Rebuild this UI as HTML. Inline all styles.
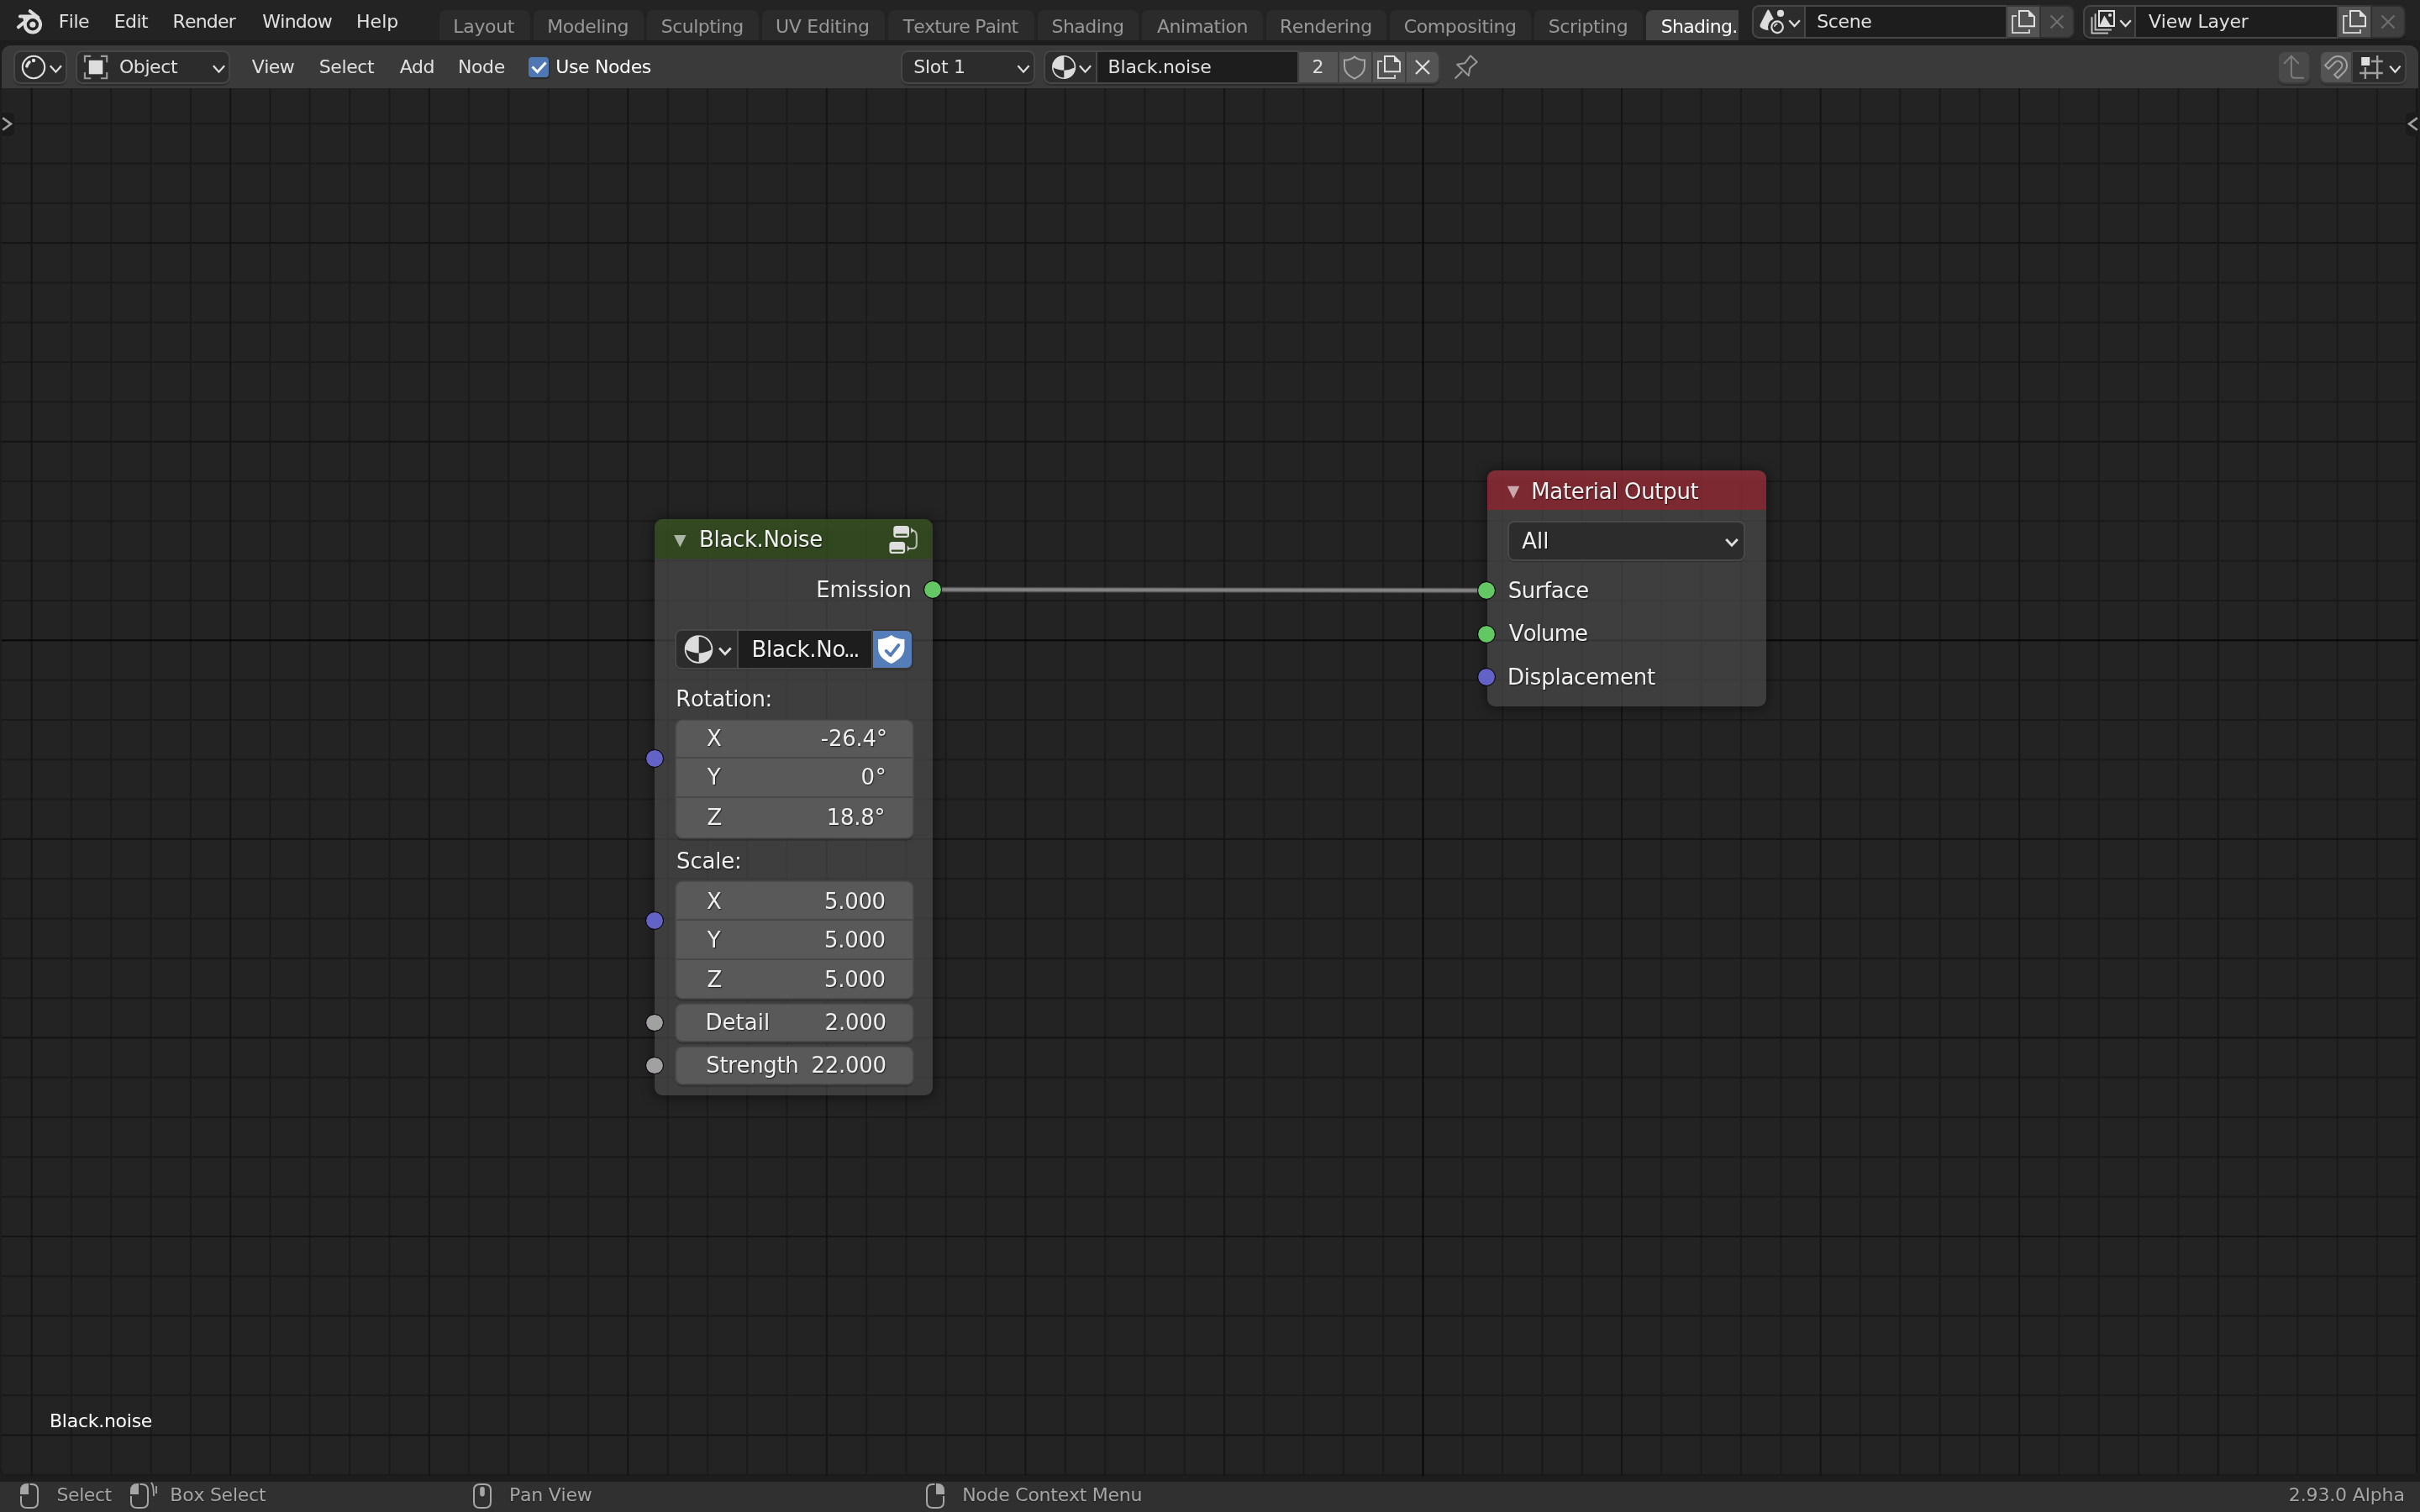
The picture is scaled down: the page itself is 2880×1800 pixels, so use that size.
<!DOCTYPE html>
<html><head><meta charset="utf-8"><title>Blender</title>
<style>
html,body{margin:0;padding:0;}
body{width:2880px;height:1800px;overflow:hidden;-webkit-font-smoothing:antialiased;background:#1d1d1d;font-family:"DejaVu Sans","Liberation Sans",sans-serif;position:relative;}
span,div{font-kerning:none;letter-spacing:-0.43px;}
.n{letter-spacing:-0.5px;}
.st{text-shadow:0 1px 1.5px rgba(0,0,0,0.45);}
.sh{text-shadow:0.8px 1.4px 1.2px rgba(0,0,0,0.7);}
svg{position:absolute;overflow:visible;}
</style></head><body><div id="app" style="position:absolute;left:0;top:0;width:2880px;height:1800px;will-change:transform">
<div style="position:absolute;left:0px;top:0px;width:2880px;height:48px;background:#232323;"></div>
<svg style="left:0;top:0" width="1" height="1"><g fill="none" stroke="#dcdcdc" stroke-linecap="round" stroke-width="4"><path d="M35.700 13.200 L45.300 20.800"/><path d="M23.900 19.600 H39.500"/><path d="M21.900 32.300 L31.500 24.300"/></g><path d="M27 21 L37 20.500 L31 27.500 L28.500 26 Z" fill="#dcdcdc"/><circle cx="38.900" cy="29.250" r="9.150" fill="none" stroke="#dcdcdc" stroke-width="4"/><circle cx="38.900" cy="29.250" r="3.600" fill="#dcdcdc"/></svg>
<span style="position:absolute;left:69.64px;top:13px;font-size:22px;line-height:25px;color:#e0e0e0;white-space:nowrap;letter-spacing:-0.461px;">File</span>
<span style="position:absolute;left:135.74px;top:13px;font-size:22px;line-height:25px;color:#e0e0e0;white-space:nowrap;letter-spacing:-0.539px;">Edit</span>
<span style="position:absolute;left:205.54px;top:13px;font-size:22px;line-height:25px;color:#e0e0e0;white-space:nowrap;letter-spacing:-0.830px;">Render</span>
<span style="position:absolute;left:312.37px;top:13px;font-size:22px;line-height:25px;color:#e0e0e0;white-space:nowrap;letter-spacing:-0.774px;">Window</span>
<span style="position:absolute;left:424.04px;top:13px;font-size:22px;line-height:25px;color:#e0e0e0;white-space:nowrap;letter-spacing:0.036px;">Help</span>
<div style="position:absolute;left:523px;top:12px;width:108px;height:36px;background:#2b2b2b;border-radius:8px 8px 0 0"></div>
<span style="position:absolute;left:539.34px;top:19px;font-size:22px;line-height:25px;color:#989898;white-space:nowrap;letter-spacing:-0.340px;">Layout</span>
<div style="position:absolute;left:635px;top:12px;width:131px;height:36px;background:#2b2b2b;border-radius:8px 8px 0 0"></div>
<span style="position:absolute;left:651.14px;top:19px;font-size:22px;line-height:25px;color:#989898;white-space:nowrap;letter-spacing:-0.388px;">Modeling</span>
<div style="position:absolute;left:770px;top:12px;width:133px;height:36px;background:#2b2b2b;border-radius:8px 8px 0 0"></div>
<span style="position:absolute;left:786.75px;top:19px;font-size:22px;line-height:25px;color:#989898;white-space:nowrap;letter-spacing:-0.522px;">Sculpting</span>
<div style="position:absolute;left:907px;top:12px;width:146px;height:36px;background:#2b2b2b;border-radius:8px 8px 0 0"></div>
<span style="position:absolute;left:923.09px;top:19px;font-size:22px;line-height:25px;color:#989898;white-space:nowrap;letter-spacing:-0.307px;">UV Editing</span>
<div style="position:absolute;left:1057px;top:12px;width:174px;height:36px;background:#2b2b2b;border-radius:8px 8px 0 0"></div>
<span style="position:absolute;left:1074.76px;top:19px;font-size:22px;line-height:25px;color:#989898;white-space:nowrap;letter-spacing:-0.842px;">Texture Paint</span>
<div style="position:absolute;left:1235px;top:12px;width:120px;height:36px;background:#2b2b2b;border-radius:8px 8px 0 0"></div>
<span style="position:absolute;left:1251.45px;top:19px;font-size:22px;line-height:25px;color:#989898;white-space:nowrap;letter-spacing:-0.488px;">Shading</span>
<div style="position:absolute;left:1359px;top:12px;width:144px;height:36px;background:#2b2b2b;border-radius:8px 8px 0 0"></div>
<span style="position:absolute;left:1376.93px;top:19px;font-size:22px;line-height:25px;color:#989898;white-space:nowrap;letter-spacing:-0.465px;">Animation</span>
<div style="position:absolute;left:1507px;top:12px;width:143px;height:36px;background:#2b2b2b;border-radius:8px 8px 0 0"></div>
<span style="position:absolute;left:1522.94px;top:19px;font-size:22px;line-height:25px;color:#989898;white-space:nowrap;letter-spacing:-0.397px;">Rendering</span>
<div style="position:absolute;left:1654px;top:12px;width:168px;height:36px;background:#2b2b2b;border-radius:8px 8px 0 0"></div>
<span style="position:absolute;left:1670.66px;top:19px;font-size:22px;line-height:25px;color:#989898;white-space:nowrap;letter-spacing:-0.356px;">Compositing</span>
<div style="position:absolute;left:1826px;top:12px;width:129px;height:36px;background:#2b2b2b;border-radius:8px 8px 0 0"></div>
<span style="position:absolute;left:1842.65px;top:19px;font-size:22px;line-height:25px;color:#989898;white-space:nowrap;letter-spacing:-0.360px;">Scripting</span>
<div style="position:absolute;left:1959px;top:12px;width:110px;height:36px;background:#424242;border-radius:8px 0 0 0;overflow:hidden"></div>
<div style="position:absolute;left:1959px;top:0;width:110px;height:48px;overflow:hidden">
<span style="position:absolute;left:17.65px;top:19px;font-size:22px;line-height:25px;color:#ffffff;white-space:nowrap;letter-spacing:-0.692px;">Shading.</span>
</div>
<div style="position:absolute;left:2085px;top:8px;width:384px;height:38px;border-radius:8.5px;box-shadow:0 2px 0.5px rgba(0,0,0,0.22)"></div>
<div style="position:absolute;left:2085px;top:6px;width:63px;height:40px;background:#464646;border-radius:8.5px 0px 0px 8.5px"></div>
<div style="position:absolute;left:2148px;top:6px;width:240px;height:40px;background:#464646;border-radius:0px 0px 0px 0px"></div>
<div style="position:absolute;left:2388px;top:6px;width:40px;height:40px;background:#3a3a3a;border-radius:0px 0px 0px 0px"></div>
<div style="position:absolute;left:2428px;top:6px;width:41px;height:40px;background:#2e2e2e;border-radius:0px 8.5px 8.5px 0px"></div>
<div style="position:absolute;left:2087px;top:8px;width:60px;height:36px;background:#2c2c2c;border-radius:6.5px 0 0 6.5px"></div>
<div style="position:absolute;left:2149px;top:8px;width:238px;height:36px;background:#1d1d1d;border-radius:0 0 0 0"></div>
<div style="position:absolute;left:2389px;top:8px;width:38px;height:36px;background:#545454;border-radius:0 0 0 0"></div>
<div style="position:absolute;left:2429px;top:8px;width:38px;height:36px;background:#3f3f3f;border-radius:0 6.5px 6.5px 0"></div>
<svg style="left:2090px;top:8px" width="36" height="36" viewBox="0 0 36 36"><path d="M13 4.8 Q14.3 2.4 15.6 4.8 L20.8 14.4 A10.8 10.8 0 0 0 14.6 28 Q9 27.800 5.4 24.8 Q3.8 23.400 4.8 21 Z" fill="#dcdcdc"/><circle cx="29" cy="7.900" r="4.100" fill="#dcdcdc"/><circle cx="25.100" cy="24.250" r="6.800" fill="none" stroke="#dcdcdc" stroke-width="2.200"/><path d="M21.900 23 A3.600 3.600 0 0 1 24.600 20.600" fill="none" stroke="#dcdcdc" stroke-width="1.800" stroke-linecap="round"/></svg>
<svg style="left:0;top:0" width="1" height="1"><path d="M2129.2999999999997 24.150000000000002 L2135.6 31.05 L2141.9 24.150000000000002" fill="none" stroke="#e0e0e0" stroke-width="2.2" stroke-linecap="butt" stroke-linejoin="miter"/></svg>
<span style="position:absolute;left:2162.25px;top:13px;font-size:22px;line-height:25px;color:#e0e0e0;white-space:nowrap;letter-spacing:-0.363px;">Scene</span>
<svg style="left:2394px;top:12px" width="28.0" height="28.0" viewBox="0 0 28 28"><g fill="none" stroke-width="2"><path d="M9 1 H20 L27 8 V19.2 H9 Z" stroke="#e0e0e0"/><path d="M6 7 H1 V27 H21 V23" stroke="#e0e0e0" opacity="0.85"/></g><path d="M20 1 L27 8 H20 Z" fill="#e0e0e0"/></svg>
<svg style="left:0;top:0" width="1" height="1"><path d="M2440.5 18.5 L2455.5 33.5 M2455.5 18.5 L2440.5 33.5" stroke="#6e6e6e" stroke-width="2.2" fill="none"/></svg>
<div style="position:absolute;left:2479px;top:8px;width:384px;height:38px;border-radius:8.5px;box-shadow:0 2px 0.5px rgba(0,0,0,0.22)"></div>
<div style="position:absolute;left:2479px;top:6px;width:62px;height:40px;background:#464646;border-radius:8.5px 0px 0px 8.5px"></div>
<div style="position:absolute;left:2541px;top:6px;width:241px;height:40px;background:#464646;border-radius:0px 0px 0px 0px"></div>
<div style="position:absolute;left:2782px;top:6px;width:40px;height:40px;background:#3a3a3a;border-radius:0px 0px 0px 0px"></div>
<div style="position:absolute;left:2822px;top:6px;width:41px;height:40px;background:#2e2e2e;border-radius:0px 8.5px 8.5px 0px"></div>
<div style="position:absolute;left:2481px;top:8px;width:59px;height:36px;background:#2c2c2c;border-radius:6.5px 0 0 6.5px"></div>
<div style="position:absolute;left:2542px;top:8px;width:239px;height:36px;background:#1d1d1d;border-radius:0 0 0 0"></div>
<div style="position:absolute;left:2783px;top:8px;width:38px;height:36px;background:#545454;border-radius:0 0 0 0"></div>
<div style="position:absolute;left:2823px;top:8px;width:38px;height:36px;background:#3f3f3f;border-radius:0 6.5px 6.5px 0"></div>
<svg style="left:0;top:0" width="1" height="1"><rect x="2498" y="13" width="18" height="18" fill="none" stroke="#e4e4e4" stroke-width="2"/><path d="M2499 30 L2504.300 18.500 L2511.500 30Z" fill="#dcdcdc"/><circle cx="2511" cy="18" r="2.100" fill="#dcdcdc"/><path d="M2493.600 16.200 V35.500 H2513 M2489.500 20.200 V39.500 H2509" fill="none" stroke="#bebebe" stroke-width="2"/></svg>
<svg style="left:0;top:0" width="1" height="1"><path d="M2523.2999999999997 24.150000000000002 L2529.6 31.05 L2535.9 24.150000000000002" fill="none" stroke="#e0e0e0" stroke-width="2.2" stroke-linecap="butt" stroke-linejoin="miter"/></svg>
<span style="position:absolute;left:2556.93px;top:13px;font-size:22px;line-height:25px;color:#e0e0e0;white-space:nowrap;letter-spacing:-0.228px;">View Layer</span>
<svg style="left:2788px;top:12px" width="28.0" height="28.0" viewBox="0 0 28 28"><g fill="none" stroke-width="2"><path d="M9 1 H20 L27 8 V19.2 H9 Z" stroke="#e0e0e0"/><path d="M6 7 H1 V27 H21 V23" stroke="#e0e0e0" opacity="0.85"/></g><path d="M20 1 L27 8 H20 Z" fill="#e0e0e0"/></svg>
<svg style="left:0;top:0" width="1" height="1"><path d="M2834.5 18.5 L2849.5 33.5 M2849.5 18.5 L2834.5 33.5" stroke="#6e6e6e" stroke-width="2.2" fill="none"/></svg>
<div style="position:absolute;left:2px;top:54.4px;width:2876px;height:50.6px;background:#3a3a3a;border-radius:11px 11px 0 0"></div>
<div style="position:absolute;left:16px;top:62px;width:64px;height:38px;border-radius:8.5px;box-shadow:0 2px 0.5px rgba(0,0,0,0.22)"></div>
<div style="position:absolute;left:16px;top:60px;width:64px;height:40px;background:#464646;border-radius:8.5px 8.5px 8.5px 8.5px"></div>
<div style="position:absolute;left:18px;top:62px;width:60px;height:36px;background:#2c2c2c;border-radius:6.5px 6.5px 6.5px 6.5px"></div>
<svg style="left:25px;top:65px" width="30" height="30" viewBox="0 0 30 30"><circle cx="15" cy="15" r="13.200" fill="none" stroke="#e2e2e2" stroke-width="2.100"/><path d="M6.900 13.900 Q7.900 10.800 10 8.900" fill="none" stroke="#e2e2e2" stroke-width="3.500" stroke-linecap="round"/><circle cx="15" cy="7" r="2.200" fill="#e2e2e2"/></svg>
<svg style="left:0;top:0" width="1" height="1"><path d="M59.800000000000004 78.3 L66.4 85.7 L73.0 78.3" fill="none" stroke="#e0e0e0" stroke-width="2.2" stroke-linecap="butt" stroke-linejoin="miter"/></svg>
<div style="position:absolute;left:90px;top:62px;width:184px;height:38px;border-radius:8.5px;box-shadow:0 2px 0.5px rgba(0,0,0,0.22)"></div>
<div style="position:absolute;left:90px;top:60px;width:184px;height:40px;background:#464646;border-radius:8.5px 8.5px 8.5px 8.5px"></div>
<div style="position:absolute;left:92px;top:62px;width:180px;height:36px;background:#2c2c2c;border-radius:6.5px 6.5px 6.5px 6.5px"></div>
<svg style="left:99px;top:65px" width="30" height="30" viewBox="0 0 30 30"><rect x="6.800" y="6.800" width="16.500" height="16.500" fill="#dedede"/><g fill="none" stroke="#9c9c9c" stroke-width="2.100"><path d="M1.900 9.200 V1.900 H9.200"/><path d="M20.900 1.900 H28.200 V9.200"/><path d="M1.900 20.900 V28.200 H9.200"/><path d="M20.900 28.200 H28.200 V20.900"/></g></svg>
<span style="position:absolute;left:141.96px;top:67px;font-size:22px;line-height:25px;color:#e0e0e0;white-space:nowrap;letter-spacing:-0.418px;">Object</span>
<svg style="left:0;top:0" width="1" height="1"><path d="M253.9 78.3 L260.5 85.7 L267.1 78.3" fill="none" stroke="#e0e0e0" stroke-width="2.2" stroke-linecap="butt" stroke-linejoin="miter"/></svg>
<span style="position:absolute;left:299.83px;top:67px;font-size:22px;line-height:25px;color:#e0e0e0;white-space:nowrap;letter-spacing:-0.598px;">View</span>
<span style="position:absolute;left:379.75px;top:67px;font-size:22px;line-height:25px;color:#e0e0e0;white-space:nowrap;letter-spacing:-0.399px;">Select</span>
<span style="position:absolute;left:475.63px;top:67px;font-size:22px;line-height:25px;color:#e0e0e0;white-space:nowrap;letter-spacing:-0.605px;">Add</span>
<span style="position:absolute;left:545.04px;top:67px;font-size:22px;line-height:25px;color:#e0e0e0;white-space:nowrap;letter-spacing:-0.429px;">Node</span>
<div style="position:absolute;left:629px;top:68px;width:24px;height:24px;background:#4f77b4;border-radius:4px;box-shadow:1px 1.5px 1px rgba(0,0,0,0.25)"></div>
<svg style="left:629px;top:68px" width="24" height="24" viewBox="0 0 24 24"><path d="M4.5 11.5 L10.5 17.5 L20.5 6.5" fill="none" stroke="#ffffff" stroke-width="3"/></svg>
<span style="position:absolute;left:661.29px;top:67px;font-size:22px;line-height:25px;color:#ffffff;white-space:nowrap;letter-spacing:-0.373px;">Use Nodes</span>
<div style="position:absolute;left:1072px;top:62px;width:160px;height:38px;border-radius:8.5px;box-shadow:0 2px 0.5px rgba(0,0,0,0.22)"></div>
<div style="position:absolute;left:1072px;top:60px;width:160px;height:40px;background:#464646;border-radius:8.5px 8.5px 8.5px 8.5px"></div>
<div style="position:absolute;left:1074px;top:62px;width:156px;height:36px;background:#2c2c2c;border-radius:6.5px 6.5px 6.5px 6.5px"></div>
<span style="position:absolute;left:1087.35px;top:67px;font-size:22px;line-height:25px;color:#e0e0e0;white-space:nowrap;letter-spacing:-0.295px;">Slot 1</span>
<svg style="left:0;top:0" width="1" height="1"><path d="M1211.4 78.3 L1218 85.7 L1224.6 78.3" fill="none" stroke="#e0e0e0" stroke-width="2.2" stroke-linecap="butt" stroke-linejoin="miter"/></svg>
<div style="position:absolute;left:1242px;top:62px;width:472px;height:38px;border-radius:8.5px;box-shadow:0 2px 0.5px rgba(0,0,0,0.22)"></div>
<div style="position:absolute;left:1242px;top:60px;width:63px;height:40px;background:#464646;border-radius:8.5px 0px 0px 8.5px"></div>
<div style="position:absolute;left:1305px;top:60px;width:240px;height:40px;background:#464646;border-radius:0px 0px 0px 0px"></div>
<div style="position:absolute;left:1545px;top:60px;width:48px;height:40px;background:#3e3e3e;border-radius:0px 0px 0px 0px"></div>
<div style="position:absolute;left:1593px;top:60px;width:40px;height:40px;background:#3e3e3e;border-radius:0px 0px 0px 0px"></div>
<div style="position:absolute;left:1633px;top:60px;width:40px;height:40px;background:#3e3e3e;border-radius:0px 0px 0px 0px"></div>
<div style="position:absolute;left:1673px;top:60px;width:41px;height:40px;background:#3e3e3e;border-radius:0px 8.5px 8.5px 0px"></div>
<div style="position:absolute;left:1244px;top:62px;width:60px;height:36px;background:#2c2c2c;border-radius:6.5px 0 0 6.5px"></div>
<div style="position:absolute;left:1306px;top:62px;width:238px;height:36px;background:#1d1d1d;border-radius:0 0 0 0"></div>
<div style="position:absolute;left:1546px;top:62px;width:46px;height:36px;background:#545454;border-radius:0 0 0 0"></div>
<div style="position:absolute;left:1594px;top:62px;width:38px;height:36px;background:#545454;border-radius:0 0 0 0"></div>
<div style="position:absolute;left:1634px;top:62px;width:38px;height:36px;background:#545454;border-radius:0 0 0 0"></div>
<div style="position:absolute;left:1674px;top:62px;width:38px;height:36px;background:#545454;border-radius:0 6.5px 6.5px 0"></div>
<svg style="left:0;top:0" width="1" height="1"><defs><clipPath id="mc1"><circle cx="1266.1" cy="80" r="13.3"/></clipPath></defs><g clip-path="url(#mc1)" fill="#dcdcdc"><path d="M1251.8 65.7 H1266.3 V83.724 Q1259.4499999999998 83.724 1252.8 80 L1251.8 80 Z"/><path d="M1266.3 83.724 Q1272.75 83.724 1279.3999999999999 80 L1280.3999999999999 80 V94.3 H1266.3 Z"/></g><circle cx="1266.1" cy="80" r="13.3" fill="none" stroke="#dcdcdc" stroke-width="1.6"/></svg>
<svg style="left:0;top:0" width="1" height="1"><path d="M1284.9 78.3 L1291.5 85.7 L1298.1 78.3" fill="none" stroke="#e0e0e0" stroke-width="2.2" stroke-linecap="butt" stroke-linejoin="miter"/></svg>
<span style="position:absolute;left:1318.54px;top:67px;font-size:22px;line-height:25px;color:#e0e0e0;white-space:nowrap;letter-spacing:-0.170px;">Black.noise</span>
<span style="position:absolute;left:1561.39px;top:67px;font-size:22px;line-height:25px;color:#e0e0e0;white-space:nowrap;letter-spacing:-0.430px;">2</span>
<svg style="left:1597px;top:65px" width="30" height="30" viewBox="0 0 30 30"><path d="M15 2.400 C11.500 5.600 7 6.600 3 6.600 V14 C3 21 8 25.500 15 28.600 C22 25.500 27 21 27 14 V6.600 C23 6.600 18.500 5.600 15 2.400Z" fill="none" stroke="#a6a6a6" stroke-width="2"/></svg>
<svg style="left:1639px;top:66px" width="28.0" height="28.0" viewBox="0 0 28 28"><g fill="none" stroke-width="2"><path d="M9 1 H20 L27 8 V19.2 H9 Z" stroke="#e0e0e0"/><path d="M6 7 H1 V27 H21 V23" stroke="#e0e0e0" opacity="0.85"/></g><path d="M20 1 L27 8 H20 Z" fill="#e0e0e0"/></svg>
<svg style="left:0;top:0" width="1" height="1"><path d="M1685 72 L1701 88 M1701 72 L1685 88" stroke="#e0e0e0" stroke-width="2.2" fill="none"/></svg>
<svg style="left:1728px;top:64px" width="32" height="32" viewBox="0 0 32 32"><g fill="none" stroke="#999999" stroke-width="2" stroke-linejoin="round"><path d="M12.100 21 L3.600 29.500"/><path d="M6.100 12.700 L15.200 11.300 L21 3.600 L22.200 2.400 L29.700 9.800 L28.400 11.100 L21.400 16.900 L19.800 26 Z"/></g></svg>
<div style="position:absolute;left:2710px;top:62px;width:40px;height:38px;border-radius:8.5px;box-shadow:0 2px 0.5px rgba(0,0,0,0.22)"></div>
<div style="position:absolute;left:2710px;top:60px;width:40px;height:40px;background:#3b3b3b;border-radius:8.5px 8.5px 8.5px 8.5px"></div>
<div style="position:absolute;left:2712px;top:62px;width:36px;height:36px;background:#494949;border-radius:6.5px 6.5px 6.5px 6.5px"></div>
<svg style="left:0;top:0" width="1" height="1"><path d="M2718.200 75.900 L2726.900 66.600 L2735.700 75.900 M2726.900 67 V88.800 Q2726.900 92.800 2730.900 92.800 H2742" fill="none" stroke="#7d7d7d" stroke-width="2"/></svg>
<div style="position:absolute;left:2760px;top:62px;width:104px;height:38px;border-radius:8.5px;box-shadow:0 2px 0.5px rgba(0,0,0,0.22)"></div>
<div style="position:absolute;left:2760px;top:60px;width:39px;height:40px;background:#3b3b3b;border-radius:8.5px 0px 0px 8.5px"></div>
<div style="position:absolute;left:2799px;top:60px;width:65px;height:40px;background:#464646;border-radius:0px 8.5px 8.5px 0px"></div>
<div style="position:absolute;left:2762px;top:62px;width:36px;height:36px;background:#545454;border-radius:6.5px 0 0 6.5px"></div>
<div style="position:absolute;left:2800px;top:62px;width:62px;height:36px;background:#2c2c2c;border-radius:0 6.5px 6.5px 0"></div>
<svg style="left:0;top:0" width="1" height="1"><g transform="translate(2782.300,77.800) rotate(45)"><path d="M-10.800 0 A10.800 10.800 0 0 1 10.800 0 V10.800 H5 V0 A5 5 0 0 0 -5 0 V10.800 H-10.800 Z" fill="none" stroke="#a2a2a2" stroke-width="2" stroke-linejoin="miter"/></g></svg>
<svg style="left:0;top:0" width="1" height="1"><rect x="2810.200" y="68" width="10" height="10" fill="#dedede"/><path d="M2829.200 66 V94 M2814.900 80 V94 M2808.100 87 H2835.800 M2822.100 73 H2835.800" stroke="#a0a0a0" stroke-width="2.400" fill="none"/></svg>
<svg style="left:0;top:0" width="1" height="1"><path d="M2844.2000000000003 78.60000000000001 L2850.4 85.8 L2856.6 78.60000000000001" fill="none" stroke="#e0e0e0" stroke-width="2.2" stroke-linecap="butt" stroke-linejoin="miter"/></svg>
<div style="position:absolute;left:2px;top:105px;width:2876px;height:1652px;background:#232323;border-radius:0 0 9px 9px;overflow:hidden"><svg style="left:0;top:0" width="2876" height="1652"><rect x="81.96" y="0" width="2" height="1652" fill="#1a1a1a"/><rect x="129.27" y="0" width="2" height="1652" fill="#1a1a1a"/><rect x="176.58" y="0" width="2" height="1652" fill="#1a1a1a"/><rect x="223.89" y="0" width="2" height="1652" fill="#1a1a1a"/><rect x="318.51" y="0" width="2" height="1652" fill="#1a1a1a"/><rect x="365.82" y="0" width="2" height="1652" fill="#1a1a1a"/><rect x="413.13" y="0" width="2" height="1652" fill="#1a1a1a"/><rect x="460.44" y="0" width="2" height="1652" fill="#1a1a1a"/><rect x="555.06" y="0" width="2" height="1652" fill="#1a1a1a"/><rect x="602.37" y="0" width="2" height="1652" fill="#1a1a1a"/><rect x="649.68" y="0" width="2" height="1652" fill="#1a1a1a"/><rect x="696.99" y="0" width="2" height="1652" fill="#1a1a1a"/><rect x="791.61" y="0" width="2" height="1652" fill="#1a1a1a"/><rect x="838.92" y="0" width="2" height="1652" fill="#1a1a1a"/><rect x="886.23" y="0" width="2" height="1652" fill="#1a1a1a"/><rect x="933.54" y="0" width="2" height="1652" fill="#1a1a1a"/><rect x="1028.16" y="0" width="2" height="1652" fill="#1a1a1a"/><rect x="1075.47" y="0" width="2" height="1652" fill="#1a1a1a"/><rect x="1122.78" y="0" width="2" height="1652" fill="#1a1a1a"/><rect x="1170.09" y="0" width="2" height="1652" fill="#1a1a1a"/><rect x="1264.71" y="0" width="2" height="1652" fill="#1a1a1a"/><rect x="1312.02" y="0" width="2" height="1652" fill="#1a1a1a"/><rect x="1359.33" y="0" width="2" height="1652" fill="#1a1a1a"/><rect x="1406.64" y="0" width="2" height="1652" fill="#1a1a1a"/><rect x="1501.26" y="0" width="2" height="1652" fill="#1a1a1a"/><rect x="1548.57" y="0" width="2" height="1652" fill="#1a1a1a"/><rect x="1595.88" y="0" width="2" height="1652" fill="#1a1a1a"/><rect x="1643.19" y="0" width="2" height="1652" fill="#1a1a1a"/><rect x="1737.81" y="0" width="2" height="1652" fill="#1a1a1a"/><rect x="1785.12" y="0" width="2" height="1652" fill="#1a1a1a"/><rect x="1832.43" y="0" width="2" height="1652" fill="#1a1a1a"/><rect x="1879.74" y="0" width="2" height="1652" fill="#1a1a1a"/><rect x="1974.36" y="0" width="2" height="1652" fill="#1a1a1a"/><rect x="2021.67" y="0" width="2" height="1652" fill="#1a1a1a"/><rect x="2068.98" y="0" width="2" height="1652" fill="#1a1a1a"/><rect x="2116.29" y="0" width="2" height="1652" fill="#1a1a1a"/><rect x="2210.91" y="0" width="2" height="1652" fill="#1a1a1a"/><rect x="2258.22" y="0" width="2" height="1652" fill="#1a1a1a"/><rect x="2305.53" y="0" width="2" height="1652" fill="#1a1a1a"/><rect x="2352.84" y="0" width="2" height="1652" fill="#1a1a1a"/><rect x="2447.46" y="0" width="2" height="1652" fill="#1a1a1a"/><rect x="2494.77" y="0" width="2" height="1652" fill="#1a1a1a"/><rect x="2542.08" y="0" width="2" height="1652" fill="#1a1a1a"/><rect x="2589.39" y="0" width="2" height="1652" fill="#1a1a1a"/><rect x="2684.01" y="0" width="2" height="1652" fill="#1a1a1a"/><rect x="2731.32" y="0" width="2" height="1652" fill="#1a1a1a"/><rect x="2778.63" y="0" width="2" height="1652" fill="#1a1a1a"/><rect x="2825.94" y="0" width="2" height="1652" fill="#1a1a1a"/><rect x="0" y="41.27" width="2876" height="2" fill="#1a1a1a"/><rect x="0" y="88.58" width="2876" height="2" fill="#1a1a1a"/><rect x="0" y="135.89" width="2876" height="2" fill="#1a1a1a"/><rect x="0" y="230.51" width="2876" height="2" fill="#1a1a1a"/><rect x="0" y="277.82" width="2876" height="2" fill="#1a1a1a"/><rect x="0" y="325.13" width="2876" height="2" fill="#1a1a1a"/><rect x="0" y="372.44" width="2876" height="2" fill="#1a1a1a"/><rect x="0" y="467.06" width="2876" height="2" fill="#1a1a1a"/><rect x="0" y="514.37" width="2876" height="2" fill="#1a1a1a"/><rect x="0" y="561.68" width="2876" height="2" fill="#1a1a1a"/><rect x="0" y="608.99" width="2876" height="2" fill="#1a1a1a"/><rect x="0" y="703.61" width="2876" height="2" fill="#1a1a1a"/><rect x="0" y="750.92" width="2876" height="2" fill="#1a1a1a"/><rect x="0" y="798.23" width="2876" height="2" fill="#1a1a1a"/><rect x="0" y="845.54" width="2876" height="2" fill="#1a1a1a"/><rect x="0" y="940.16" width="2876" height="2" fill="#1a1a1a"/><rect x="0" y="987.47" width="2876" height="2" fill="#1a1a1a"/><rect x="0" y="1034.78" width="2876" height="2" fill="#1a1a1a"/><rect x="0" y="1082.09" width="2876" height="2" fill="#1a1a1a"/><rect x="0" y="1176.71" width="2876" height="2" fill="#1a1a1a"/><rect x="0" y="1224.02" width="2876" height="2" fill="#1a1a1a"/><rect x="0" y="1271.33" width="2876" height="2" fill="#1a1a1a"/><rect x="0" y="1318.64" width="2876" height="2" fill="#1a1a1a"/><rect x="0" y="1413.26" width="2876" height="2" fill="#1a1a1a"/><rect x="0" y="1460.57" width="2876" height="2" fill="#1a1a1a"/><rect x="0" y="1507.88" width="2876" height="2" fill="#1a1a1a"/><rect x="0" y="1555.19" width="2876" height="2" fill="#1a1a1a"/><rect x="0" y="1649.81" width="2876" height="2" fill="#1a1a1a"/><rect x="34.65" y="0" width="2" height="1652" fill="#141414"/><rect x="271.20" y="0" width="2" height="1652" fill="#141414"/><rect x="507.75" y="0" width="2" height="1652" fill="#141414"/><rect x="744.30" y="0" width="2" height="1652" fill="#141414"/><rect x="980.85" y="0" width="2" height="1652" fill="#141414"/><rect x="1217.40" y="0" width="2" height="1652" fill="#141414"/><rect x="1453.95" y="0" width="2" height="1652" fill="#141414"/><rect x="1927.05" y="0" width="2" height="1652" fill="#141414"/><rect x="2163.60" y="0" width="2" height="1652" fill="#141414"/><rect x="2400.15" y="0" width="2" height="1652" fill="#141414"/><rect x="2636.70" y="0" width="2" height="1652" fill="#141414"/><rect x="2873.25" y="0" width="2" height="1652" fill="#141414"/><rect x="0" y="183.20" width="2876" height="2" fill="#141414"/><rect x="0" y="419.75" width="2876" height="2" fill="#141414"/><rect x="0" y="892.85" width="2876" height="2" fill="#141414"/><rect x="0" y="1129.40" width="2876" height="2" fill="#141414"/><rect x="0" y="1365.95" width="2876" height="2" fill="#141414"/><rect x="0" y="1602.50" width="2876" height="2" fill="#141414"/><rect x="1690.50" y="0" width="2" height="1652" fill="#080808"/><rect x="0" y="656.30" width="2876" height="2" fill="#080808"/></svg></div>
<div style="position:absolute;left:2px;top:134px;width:15px;height:28px;background:#1b1b1b;border-radius:0 6px 6px 0"></div>
<svg style="left:0;top:0" width="1" height="1"><path d="M3.2 140.4 L13 147.6 L3.2 154.7" fill="none" stroke="#a0a0a0" stroke-width="2.6"/></svg>
<div style="position:absolute;left:2863px;top:134px;width:15px;height:28px;background:#1b1b1b;border-radius:6px 0 0 6px"></div>
<svg style="left:0;top:0" width="1" height="1"><path d="M2876.8 140.4 L2867 147.6 L2876.8 154.7" fill="none" stroke="#a0a0a0" stroke-width="2.6"/></svg>
<span style="position:absolute;left:59.04px;top:1679px;font-size:22px;line-height:25px;color:#ffffff;white-space:nowrap;letter-spacing:-0.270px;">Black.noise</span>
<div style="position:absolute;left:1110px;top:697.8px;width:659px;height:7.8px;transform-origin:0 50%;transform:rotate(0.09deg);background:linear-gradient(rgba(131,131,131,0) 0,rgba(131,131,131,0.28) 1px,rgba(131,131,131,1) 2.6px,rgba(131,131,131,1) 5.2px,rgba(131,131,131,0.28) 6.8px,rgba(131,131,131,0) 7.8px)"></div>
<div style="position:absolute;left:778.8px;top:617.8px;width:331.29999999999995px;height:686.0px;border-radius:9.5px;box-shadow:0 1px 14px 2px rgba(0,0,0,0.42);overflow:hidden"><div style="height:47.5px;background:linear-gradient(rgba(57,84,35,0.8),rgba(53,80,30,0.8) 30%)"></div><div style="height:638.5px;background:rgba(76,76,76,0.66)"></div></div>
<svg style="left:0;top:0" width="1" height="1"><path d="M802 637 H816.6 L809.3 651.4 Z" fill="rgba(255,255,255,0.6)"/></svg>
<span class="sh" style="position:absolute;left:832.05px;top:627px;font-size:26px;line-height:30px;color:#f0f0f0;white-space:nowrap;letter-spacing:-0.360px;">Black.Noise</span>
<svg style="left:1056px;top:624px" width="38" height="38" viewBox="0 0 38 38"><g><rect x="7.300" y="1.900" width="18.700" height="14.200" rx="3.600" fill="#dedede"/><rect x="9.800" y="11.400" width="14" height="2.300" rx="0.800" fill="#2f4a1c"/><rect x="2.400" y="21" width="18.700" height="14" rx="3.600" fill="#dedede"/><rect x="4.700" y="30.400" width="14.200" height="2.300" rx="0.800" fill="#2f4a1c"/><path d="M30.500 7.600 Q34.800 8.600 34.800 14 V24 Q34.800 29 29.500 29 H26" fill="none" stroke="#b4bdb0" stroke-width="2.100"/><path d="M28.200 4.100 L31.400 7.550 L28.200 11Z" fill="#dedede"/><path d="M23.800 25.200 L26.600 29 L23.800 32.800Z" fill="#dedede"/></g></svg>
<span class="sh" style="position:absolute;left:971.25px;top:687px;font-size:26px;line-height:30px;color:#f0f0f0;white-space:nowrap;letter-spacing:-0.288px;">Emission</span>
<div style="position:absolute;left:1099.00px;top:691.00px;width:22px;height:22px;box-sizing:border-box;border-radius:50%;background:#63c763;border:1.2px solid #08030a;background-clip:padding-box"></div>
<div style="position:absolute;left:803.3px;top:749px;width:283.5px;height:48.2px;background:#484848;border-radius:8px;box-shadow:0 1px 1px rgba(0,0,0,0.2)"></div>
<div style="position:absolute;left:1037.6px;top:749px;width:49.4px;height:48.2px;background:#393634;border-radius:0 8px 8px 0"></div>
<div style="position:absolute;left:805.1px;top:751.1px;width:72px;height:43.9px;background:#2c2c2c;border-radius:6px 0 0 6px"></div>
<div style="position:absolute;left:879.2px;top:751.1px;width:157.8px;height:43.9px;background:#1d1d1d"></div>
<div style="position:absolute;left:1038.9px;top:751.1px;width:46.1px;height:43.9px;background:#557dba;border-radius:0 6px 6px 0"></div>
<svg style="left:0;top:0" width="1" height="1"><defs><clipPath id="mc2"><circle cx="831.5" cy="773" r="15.9"/></clipPath></defs><g clip-path="url(#mc2)" fill="#dcdcdc"><path d="M814.6 756.1 H831.7 V777.452 Q823.55 777.452 815.6 773 L814.6 773 Z"/><path d="M831.7 777.452 Q839.45 777.452 847.4 773 L848.4 773 V789.9 H831.7 Z"/></g><circle cx="831.5" cy="773" r="15.9" fill="none" stroke="#dcdcdc" stroke-width="1.8"/></svg>
<svg style="left:0;top:0" width="1" height="1"><path d="M856.1 771.5 L862.9 778.7 L869.6999999999999 771.5" fill="none" stroke="#e0e0e0" stroke-width="2.8" stroke-linecap="butt" stroke-linejoin="miter"/></svg>
<span class="sh" style="position:absolute;left:894.55px;top:758px;font-size:26px;line-height:30px;color:#f0f0f0;white-space:nowrap;letter-spacing:-0.313px;">Black.No</span>
<span class="sh" style="position:absolute;left:1003.72px;top:758px;font-size:26px;line-height:30px;color:#f0f0f0;white-space:nowrap;letter-spacing:-2.460px;">...</span>
<svg style="left:1043px;top:754px" width="36" height="38" viewBox="0 0 36 38"><path d="M17.700 2 C13.500 5.600 8 7 2 7 V17 C2 26 8.500 32 17.700 36 C26.900 32 33.400 26 33.400 17 V7 C27.400 7 21.900 5.600 17.700 2Z" fill="#ffffff"/><path d="M11.600 20.900 L16.800 26.100 L26.400 14" fill="none" stroke="#557dba" stroke-width="3.800" stroke-linecap="round" stroke-linejoin="round"/></svg>
<span class="sh" style="position:absolute;left:804.35px;top:817px;font-size:26px;line-height:30px;color:#f0f0f0;white-space:nowrap;letter-spacing:-0.460px;">Rotation:</span>
<span class="sh" style="position:absolute;left:805.09px;top:1010px;font-size:26px;line-height:30px;color:#f0f0f0;white-space:nowrap;letter-spacing:-0.193px;">Scale:</span>
<div style="position:absolute;left:805px;top:857.8px;width:280.5px;height:138.9px;background:#484848;border-radius:7px;box-shadow:0 0 0 1.6px #4b4b4b,0 3.8px 0.8px -0.2px rgba(0,0,0,0.17);"></div>
<div style="position:absolute;left:805px;top:857.8px;width:280.5px;height:43.2px;background:#595959;border-radius:7px 7px 0 0;"></div>
<span class="sh" style="position:absolute;left:841.03px;top:864px;font-size:26px;line-height:30px;color:#f0f0f0;white-space:nowrap;letter-spacing:0.000px;">X</span>
<span class="sh" style="position:absolute;left:976.83px;top:864px;font-size:26px;line-height:30px;color:#f0f0f0;white-space:nowrap;letter-spacing:-0.245px;">-26.4°</span>
<div style="position:absolute;left:805px;top:903.2px;width:280.5px;height:44.8px;background:#595959;border-radius:0;"></div>
<span class="sh" style="position:absolute;left:841.85px;top:910px;font-size:26px;line-height:30px;color:#f0f0f0;white-space:nowrap;letter-spacing:0.000px;">Y</span>
<span class="sh" style="position:absolute;left:1024.49px;top:910px;font-size:26px;line-height:30px;color:#f0f0f0;white-space:nowrap;letter-spacing:0.847px;">0°</span>
<div style="position:absolute;left:805px;top:950px;width:280.5px;height:46.7px;background:#595959;border-radius:0 0 7px 7px;"></div>
<span class="sh" style="position:absolute;left:841.43px;top:958px;font-size:26px;line-height:30px;color:#f0f0f0;white-space:nowrap;letter-spacing:0.000px;">Z</span>
<span class="sh" style="position:absolute;left:983.74px;top:958px;font-size:26px;line-height:30px;color:#f0f0f0;white-space:nowrap;letter-spacing:-0.265px;">18.8°</span>
<div style="position:absolute;left:805px;top:1050.3px;width:280.5px;height:137.7px;background:#484848;border-radius:7px;box-shadow:0 0 0 1.6px #4b4b4b,0 3.8px 0.8px -0.2px rgba(0,0,0,0.17);"></div>
<div style="position:absolute;left:805px;top:1050.3px;width:280.5px;height:43.7px;background:#595959;border-radius:7px 7px 0 0;"></div>
<span class="sh" style="position:absolute;left:841.03px;top:1058px;font-size:26px;line-height:30px;color:#f0f0f0;white-space:nowrap;letter-spacing:0.000px;">X</span>
<span class="sh" style="position:absolute;left:981.09px;top:1058px;font-size:26px;line-height:30px;color:#f0f0f0;white-space:nowrap;letter-spacing:-0.350px;">5.000</span>
<div style="position:absolute;left:805px;top:1096px;width:280.5px;height:45.0px;background:#595959;border-radius:0;"></div>
<span class="sh" style="position:absolute;left:841.85px;top:1104px;font-size:26px;line-height:30px;color:#f0f0f0;white-space:nowrap;letter-spacing:0.000px;">Y</span>
<span class="sh" style="position:absolute;left:981.09px;top:1104px;font-size:26px;line-height:30px;color:#f0f0f0;white-space:nowrap;letter-spacing:-0.350px;">5.000</span>
<div style="position:absolute;left:805px;top:1143px;width:280.5px;height:45.0px;background:#595959;border-radius:0 0 7px 7px;"></div>
<span class="sh" style="position:absolute;left:841.43px;top:1151px;font-size:26px;line-height:30px;color:#f0f0f0;white-space:nowrap;letter-spacing:0.000px;">Z</span>
<span class="sh" style="position:absolute;left:981.09px;top:1151px;font-size:26px;line-height:30px;color:#f0f0f0;white-space:nowrap;letter-spacing:-0.350px;">5.000</span>
<div style="position:absolute;left:805px;top:1196.1px;width:280.5px;height:43.1px;background:#595959;border-radius:7px;box-shadow:0 0 0 1.6px #4b4b4b,0 3.8px 0.8px -0.2px rgba(0,0,0,0.17);"></div>
<span class="sh" style="position:absolute;left:839.45px;top:1202px;font-size:26px;line-height:30px;color:#f0f0f0;white-space:nowrap;letter-spacing:0.040px;">Detail</span>
<span class="sh" style="position:absolute;left:981.60px;top:1202px;font-size:26px;line-height:30px;color:#f0f0f0;white-space:nowrap;letter-spacing:-0.250px;">2.000</span>
<div style="position:absolute;left:805px;top:1247.2px;width:280.5px;height:43.1px;background:#595959;border-radius:7px;box-shadow:0 0 0 1.6px #4b4b4b,0 3.8px 0.8px -0.2px rgba(0,0,0,0.17);"></div>
<span class="sh" style="position:absolute;left:840.29px;top:1253px;font-size:26px;line-height:30px;color:#f0f0f0;white-space:nowrap;letter-spacing:-0.374px;">Strength</span>
<span class="sh" style="position:absolute;left:965.50px;top:1253px;font-size:26px;line-height:30px;color:#f0f0f0;white-space:nowrap;letter-spacing:-0.289px;">22.000</span>
<div style="position:absolute;left:768.40px;top:892.20px;width:21.6px;height:21.6px;box-sizing:border-box;border-radius:50%;background:#6363c7;border:1.2px solid #08030a;background-clip:padding-box"></div>
<div style="position:absolute;left:768.40px;top:1085.20px;width:21.6px;height:21.6px;box-sizing:border-box;border-radius:50%;background:#6363c7;border:1.2px solid #08030a;background-clip:padding-box"></div>
<div style="position:absolute;left:768.40px;top:1206.70px;width:21.6px;height:21.6px;box-sizing:border-box;border-radius:50%;background:#a1a1a1;border:1.2px solid #08030a;background-clip:padding-box"></div>
<div style="position:absolute;left:768.40px;top:1257.70px;width:21.6px;height:21.6px;box-sizing:border-box;border-radius:50%;background:#a1a1a1;border:1.2px solid #08030a;background-clip:padding-box"></div>
<div style="position:absolute;left:1770.2px;top:559.8px;width:331.39999999999986px;height:281.20000000000005px;border-radius:9.5px;box-shadow:0 1px 14px 2px rgba(0,0,0,0.42);overflow:hidden"><div style="height:47.30000000000007px;background:linear-gradient(rgba(152,48,60,0.8),rgba(146,42,53,0.8) 30%)"></div><div style="height:233.89999999999998px;background:rgba(76,76,76,0.66)"></div></div>
<svg style="left:0;top:0" width="1" height="1"><path d="M1793.8 578.8 H1808.3 L1801.05 593.5 Z" fill="rgba(255,255,255,0.6)"/></svg>
<span class="sh" style="position:absolute;left:1822.25px;top:570px;font-size:26px;line-height:30px;color:#f0f0f0;white-space:nowrap;letter-spacing:-0.338px;">Material Output</span>
<div style="position:absolute;left:1794px;top:620.2px;width:283.4px;height:48px;background:#494949;border-radius:8px;box-shadow:0 1px 1px rgba(0,0,0,0.2)"></div>
<div style="position:absolute;left:1796.1px;top:622.4px;width:278.9px;height:43.5px;background:#2c2c2c;border-radius:6px"></div>
<span class="sh" style="position:absolute;left:1811.30px;top:629px;font-size:26px;line-height:30px;color:#f0f0f0;white-space:nowrap;letter-spacing:-0.046px;">All</span>
<svg style="left:0;top:0" width="1" height="1"><path d="M2054.2 642.0 L2061 649.2 L2067.8 642.0" fill="none" stroke="#e0e0e0" stroke-width="2.8" stroke-linecap="butt" stroke-linejoin="miter"/></svg>
<span class="sh" style="position:absolute;left:1794.69px;top:688px;font-size:26px;line-height:30px;color:#f0f0f0;white-space:nowrap;letter-spacing:-0.425px;">Surface</span>
<span class="sh" style="position:absolute;left:1795.80px;top:739px;font-size:26px;line-height:30px;color:#f0f0f0;white-space:nowrap;letter-spacing:-0.886px;">Volume</span>
<span class="sh" style="position:absolute;left:1794.05px;top:791px;font-size:26px;line-height:30px;color:#f0f0f0;white-space:nowrap;letter-spacing:-0.233px;">Displacement</span>
<div style="position:absolute;left:1758.40px;top:691.80px;width:22px;height:22px;box-sizing:border-box;border-radius:50%;background:#63c763;border:1.2px solid #08030a;background-clip:padding-box"></div>
<div style="position:absolute;left:1758.40px;top:744.10px;width:22px;height:22px;box-sizing:border-box;border-radius:50%;background:#63c763;border:1.2px solid #08030a;background-clip:padding-box"></div>
<div style="position:absolute;left:1758.40px;top:795.40px;width:22px;height:22px;box-sizing:border-box;border-radius:50%;background:#6363c7;border:1.2px solid #08030a;background-clip:padding-box"></div>
<div style="position:absolute;left:0px;top:1764px;width:2880px;height:36px;background:#303030;"></div>
<svg style="left:24px;top:1766px" width="22" height="30" viewBox="0 0 22 30"><path d="M11.5 1 H14 Q21 1 21 8 V22 Q21 29 14 29 H8 Q1 29 1 22 V15" fill="none" stroke="#a6a6a6" stroke-width="2"/><path d="M0 13 V8.5 Q0 0 8.5 0 H10 V13 Z" fill="#a6a6a6"/></svg>
<span class="st" style="position:absolute;left:67.55px;top:1767px;font-size:22px;line-height:25px;color:#a6a6a6;white-space:nowrap;letter-spacing:-0.439px;">Select</span>
<svg style="left:155px;top:1766px" width="22" height="30" viewBox="0 0 22 30"><path d="M11.5 1 H14 Q21 1 21 8 V22 Q21 29 14 29 H8 Q1 29 1 22 V15" fill="none" stroke="#a6a6a6" stroke-width="2"/><path d="M0 13 V8.5 Q0 0 8.5 0 H10 V13 Z" fill="#a6a6a6"/></svg>
<svg style="left:0;top:0" width="1" height="1"><path d="M180 1765 Q183 1768 183 1781 M186 1769 V1778" fill="none" stroke="#a6a6a6" stroke-width="1.8"/></svg>
<span class="st" style="position:absolute;left:202.34px;top:1767px;font-size:22px;line-height:25px;color:#a6a6a6;white-space:nowrap;letter-spacing:-0.250px;">Box Select</span>
<svg style="left:563px;top:1766px" width="22" height="30" viewBox="0 0 22 30"><path d="M8 1 H14 Q21 1 21 8 V22 Q21 29 14 29 H8 Q1 29 1 22 V8 Q1 1 8 1Z" fill="none" stroke="#a6a6a6" stroke-width="2"/><rect x="8.2" y="4" width="5.6" height="11.5" rx="2.4" fill="#a6a6a6"/></svg>
<span class="st" style="position:absolute;left:606.04px;top:1767px;font-size:22px;line-height:25px;color:#a6a6a6;white-space:nowrap;letter-spacing:-0.250px;">Pan View</span>
<svg style="left:1102px;top:1766px" width="22" height="30" viewBox="0 0 22 30"><path d="M10.5 1 H8 Q1 1 1 8 V22 Q1 29 8 29 H14 Q21 29 21 22 V15" fill="none" stroke="#a6a6a6" stroke-width="2"/><path d="M22 13 V8.5 Q22 0 13.5 0 H12 V13 Z" fill="#a6a6a6"/></svg>
<span class="st" style="position:absolute;left:1145.14px;top:1767px;font-size:22px;line-height:25px;color:#a6a6a6;white-space:nowrap;letter-spacing:-0.250px;">Node Context Menu</span>
<span class="st" style="position:absolute;left:2723.79px;top:1767px;font-size:22px;line-height:25px;color:#a6a6a6;white-space:nowrap;letter-spacing:-0.128px;">2.93.0 Alpha</span>
</div></body></html>
